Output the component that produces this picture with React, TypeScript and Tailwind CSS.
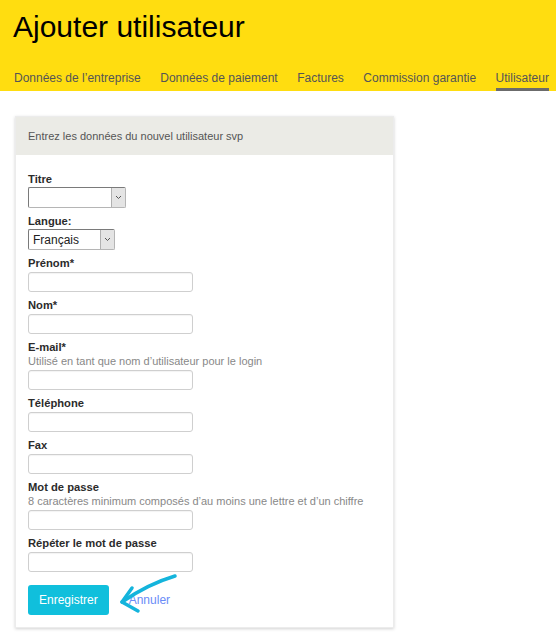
import React from 'react';

const tabs = [
  { label: 'Données de l’entreprise' },
  { label: 'Données de paiement' },
  { label: 'Factures' },
  { label: 'Commission garantie' },
  { label: 'Utilisateur', active: true },
];

const Label = ({ children }: { children: React.ReactNode }) => (
  <div className="text-[11.2px] font-bold leading-[14px] text-[#2b2b2b]">{children}</div>
);

const Help = ({ children }: { children: React.ReactNode }) => (
  <div className="text-[11px] leading-[14px] text-[#888]">{children}</div>
);

const TextInput = ({ type = 'text' }: { type?: string }) => (
  <input
    type={type}
    className="mt-[2px] block h-[20px] w-[165px] rounded-[3px] border border-[#cfcfcf] bg-white shadow-[inset_0_1px_1px_rgba(0,0,0,0.05)] outline-none"
  />
);

const FakeSelect = ({ value, width }: { value?: string; width: string }) => (
  <div
    className={`mt-[1px] flex h-[21px] ${width} rounded-[2px] border border-[#7a7a7a] border-b-[#b5b5b5] border-r-[#b5b5b5] bg-white`}
  >
    <div className="flex flex-1 items-center pl-[4px] text-[12px] text-[#222]">{value}</div>
    <div className="flex w-[14px] items-center justify-center border-l border-[#b0b0b0] bg-[#e4e4e4]">
      <svg width="7" height="5" viewBox="0 0 7 5">
        <path d="M1 1 L3.5 3.5 L6 1" fill="none" stroke="#555" strokeWidth="1" />
      </svg>
    </div>
  </div>
);

export default function App() {
  return (
    <div className="min-h-[644px] bg-white" style={{ fontFamily: '"Liberation Sans", Arial, sans-serif' }}>
      <div className="overflow-hidden bg-[#ffdd10] pl-[13px] pt-[10px]">
        <h1 className="text-[30px] leading-[34px] text-black">Ajouter utilisateur</h1>
        <nav className="mt-[27px] flex gap-[19.5px] pl-[1px]">
          {tabs.map((t) => (
            <div
              key={t.label}
              className={`shrink-0 whitespace-nowrap border-b-[3px] pb-[3px] text-[12px] leading-[14px] text-[#555] ${
                t.active ? 'border-[#6b6b6b]' : 'border-transparent'
              }`}
            >
              {t.label}
            </div>
          ))}
        </nav>
      </div>

      <div className="ml-[15px] mt-[25px] w-[379px] border border-[#ececec] bg-white shadow-[0_1px_3px_rgba(0,0,0,0.18)]">
        <div className="flex h-[38px] items-center bg-[#ebebe6] px-[12px] text-[11px] text-[#555]">
          Entrez les données du nouvel utilisateur svp
        </div>
        <div className="px-[12px] pb-[12px] pt-[17px]">
          <div className="mb-[6px]">
            <Label>Titre</Label>
            <FakeSelect width="w-[98px]" />
          </div>
          <div className="mb-[6px]">
            <Label>Langue:</Label>
            <FakeSelect value="Français" width="w-[87px]" />
          </div>
          <div className="mb-[6px]">
            <Label>Prénom*</Label>
            <TextInput />
          </div>
          <div className="mb-[6px]">
            <Label>Nom*</Label>
            <TextInput />
          </div>
          <div className="mb-[6px]">
            <Label>E-mail*</Label>
            <Help>Utilisé en tant que nom d’utilisateur pour le login</Help>
            <TextInput />
          </div>
          <div className="mb-[6px]">
            <Label>Téléphone</Label>
            <TextInput />
          </div>
          <div className="mb-[6px]">
            <Label>Fax</Label>
            <TextInput />
          </div>
          <div className="mb-[6px]">
            <Label>Mot de passe</Label>
            <Help>8 caractères minimum composés d’au moins une lettre et d’un chiffre</Help>
            <TextInput type="password" />
          </div>
          <div>
            <Label>Répéter le mot de passe</Label>
            <TextInput type="password" />
          </div>

          <div className="relative mt-[13px] flex items-center gap-[20px]">
            <button className="h-[30px] rounded-[3px] bg-[#10bfdc] px-[11px] text-[12px] text-white">
              Enregistrer
            </button>
            <a className="text-[12px] text-[#6a8cf7]">Annuler</a>
            <svg
              className="absolute left-[90px] top-[-12px]"
              width="62"
              height="42"
              viewBox="0 0 62 42"
            >
              <path
                d="M57 3 Q30 11 4 29"
                fill="none"
                stroke="#14b4dc"
                strokeWidth="3.5"
                strokeLinecap="round"
              />
              <path
                d="M14 15 L4 29 L20 38"
                fill="none"
                stroke="#14b4dc"
                strokeWidth="3.5"
                strokeLinecap="round"
                strokeLinejoin="round"
              />
            </svg>
          </div>
        </div>
      </div>
    </div>
  );
}
